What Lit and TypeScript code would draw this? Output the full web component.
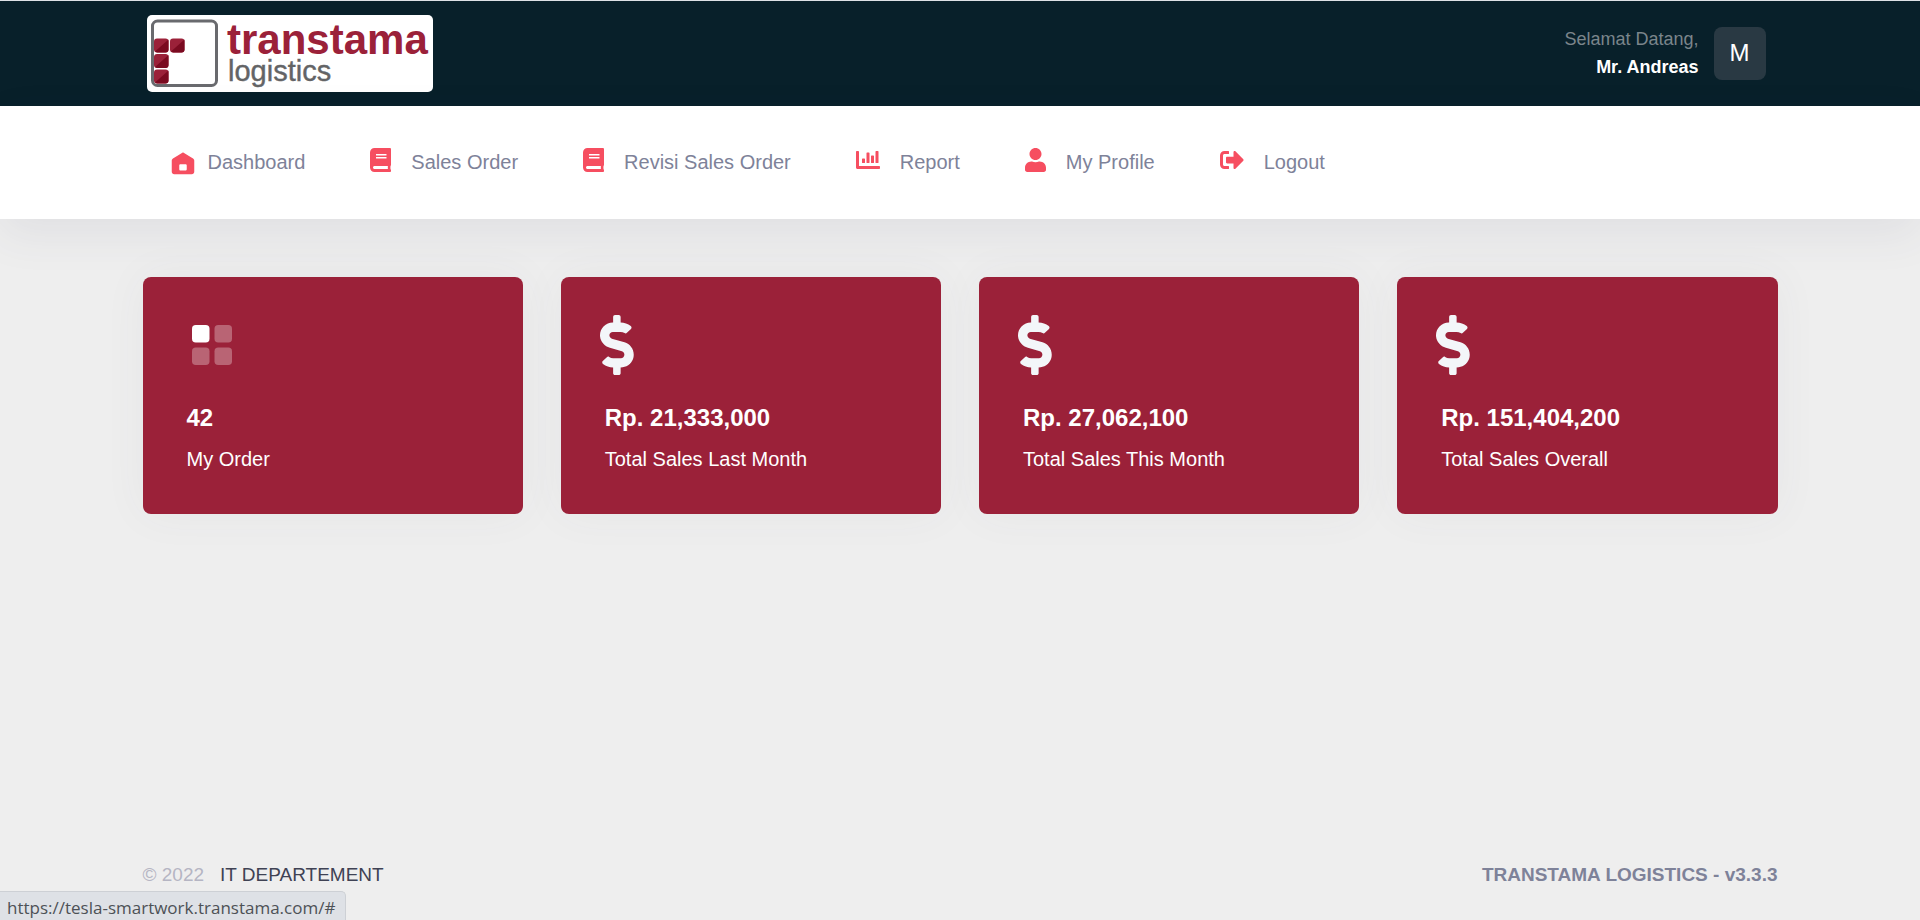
import { LitElement, html, svg, css } from "lit";
import { customElement, property } from "lit/decorators.js";

const fa = (width: number, path: string) => html`
  <svg class="fa" viewBox="0 0 ${width} 512" height="24" aria-hidden="true">
    <path fill="currentColor" d=${path}></path>
  </svg>
`;

const BOOK =
  "M448 360V24c0-13.3-10.7-24-24-24H96C43 0 0 43 0 96v320c0 53 43 96 96 96h328c13.3 0 24-10.7 24-24v-16c0-7.5-3.5-14.3-8.9-18.7-4.2-15.4-4.2-59.3 0-74.7 5.4-4.3 8.9-11.1 8.9-18.6zM128 134c0-3.3 2.7-6 6-6h212c3.3 0 6 2.7 6 6v20c0 3.3-2.7 6-6 6H134c-3.3 0-6-2.7-6-6v-20zm0 64c0-3.3 2.7-6 6-6h212c3.3 0 6 2.7 6 6v20c0 3.3-2.7 6-6 6H134c-3.3 0-6-2.7-6-6v-20zm253.4 250H96c-17.7 0-32-14.3-32-32 0-17.6 14.4-32 32-32h285.4c-1.9 17.1-1.9 46.9 0 64z";
const CHART =
  "M332.8 320h38.4c6.4 0 12.8-6.4 12.8-12.8V172.8c0-6.4-6.4-12.8-12.8-12.8h-38.4c-6.4 0-12.8 6.4-12.8 12.8v134.4c0 6.4 6.4 12.8 12.8 12.8zm96 0h38.4c6.4 0 12.8-6.4 12.8-12.8V76.8c0-6.4-6.4-12.8-12.8-12.8h-38.4c-6.4 0-12.8 6.4-12.8 12.8v230.4c0 6.4 6.4 12.8 12.8 12.8zm-288 0h38.4c6.4 0 12.8-6.4 12.8-12.8v-70.4c0-6.4-6.4-12.8-12.8-12.8h-38.4c-6.4 0-12.8 6.4-12.8 12.8v70.4c0 6.4 6.4 12.8 12.8 12.8zm96 0h38.4c6.4 0 12.8-6.4 12.8-12.8V108.8c0-6.4-6.4-12.8-12.8-12.8h-38.4c-6.4 0-12.8 6.4-12.8 12.8v198.4c0 6.4 6.4 12.8 12.8 12.8zM496 384H64V80c0-8.84-7.16-16-16-16H16C7.16 64 0 71.16 0 80v336c0 17.67 14.33 32 32 32h464c8.84 0 16-7.16 16-16v-32c0-8.84-7.16-16-16-16z";
const USER =
  "M224 256c70.7 0 128-57.3 128-128S294.7 0 224 0 96 57.3 96 128s57.3 128 128 128zm89.6 32h-16.7c-22.2 10.2-46.9 16-72.9 16s-50.6-5.8-72.9-16h-16.7C60.2 288 0 348.2 0 422.4V464c0 26.5 21.5 48 48 48h352c26.5 0 48-21.5 48-48v-41.6c0-74.2-60.2-134.4-134.4-134.4z";
const SIGN_OUT =
  "M497 273L329 441c-15 15-41 4.5-41-17v-96H152c-13.3 0-24-10.7-24-24v-96c0-13.3 10.7-24 24-24h136V88c0-21.4 25.9-32 41-17l168 168c9.3 9.4 9.3 24.6 0 34zM192 436v-40c0-6.6-5.4-12-12-12H96c-17.7 0-32-14.3-32-32V160c0-17.7 14.3-32 32-32h84c6.6 0 12-5.4 12-12V76c0-6.6-5.4-12-12-12H96c-53 0-96 43-96 96v192c0 53 43 96 96 96h84c6.6 0 12-5.4 12-12z";
const DOLLAR =
  "M209.2 233.4l-108-31.6C88.7 198.2 80 186.5 80 173.5c0-16.3 13.2-29.5 29.5-29.5h66.3c12.2 0 24.2 3.7 34.2 10.5 6.1 4.1 14.3 3.1 19.5-2l34.8-34c7.1-6.9 6.1-18.4-1.8-24.5C238 74.8 207.4 64.1 176 64V16c0-8.8-7.2-16-16-16h-32c-8.8 0-16 7.2-16 16v48h-2.5C45.8 64-5.4 118.7.5 183.6c4.2 46.1 39.4 83.6 83.8 96.6l102.5 30c12.5 3.7 21.2 15.3 21.2 28.3 0 16.3-13.2 29.5-29.5 29.5h-66.3C100 368 88 364.3 78 357.5c-6.1-4.1-14.3-3.1-19.5 2l-34.8 34c-7.1 6.9-6.1 18.4 1.8 24.5 24.5 19.2 55.1 29.9 86.5 30v48c0 8.8 7.2 16 16 16h32c8.8 0 16-7.2 16-16v-48.2c46.6-.9 90.3-28.6 105.7-72.7 21.5-61.6-14.6-124.8-72.5-141.7z";

const homeIcon = html`
  <svg class="home" viewBox="0 0 24 24" width="30" height="30" aria-hidden="true">
    <path
      fill="currentColor"
      fill-rule="evenodd"
      d="M3.957 8.415L11.479 3.819C11.799 3.623 12.201 3.623 12.521 3.819L20.043 8.415C20.637 8.778 21 9.425 21 10.122V19C21 20.105 20.105 21 19 21H5C3.895 21 3 20.105 3 19V10.122C3 9.425 3.363 8.778 3.957 8.415ZM10 13C9.448 13 9 13.448 9 14V17C9 17.552 9.448 18 10 18H14C14.552 18 15 17.552 15 17V14C15 13.448 14.552 13 14 13Z"
    ></path>
  </svg>
`;

const MENU = [
  { label: "Dashboard", icon: homeIcon, home: true },
  { label: "Sales Order", icon: fa(448, BOOK) },
  { label: "Revisi Sales Order", icon: fa(448, BOOK) },
  { label: "Report", icon: fa(512, CHART) },
  { label: "My Profile", icon: fa(448, USER) },
  { label: "Logout", icon: fa(512, SIGN_OUT) },
];

@customElement("brand-logo")
class BrandLogo extends LitElement {
  static styles = css`
    :host {
      display: block;
      line-height: 0;
    }
    .name {
      font: bold 42px "Liberation Sans", Arial, sans-serif;
      fill: #9b2139;
    }
    .sub {
      font: 29px "Liberation Sans", Arial, sans-serif;
      fill: #636466;
      stroke: #636466;
      stroke-width: 0.4;
    }
  `;

  private tile(x: number, y: number) {
    return svg`
      <rect x=${x} y=${y} width="14.5" height="14" rx="3" fill="#9b2139"></rect>
      <path d="M${x + 14.5} ${y + 1}V${y + 11}a3 3 0 0 1-3 3H${x + 3}l-2-1z" fill="#7a0a20"></path>
    `;
  }

  render() {
    return html`
      <svg width="286" height="77" viewBox="0 0 286 77" role="img" aria-label="transtama logistics">
        <rect width="286" height="77" rx="5" fill="#fff"></rect>
        <rect x="5.5" y="6" width="64" height="64.5" rx="5" fill="none" stroke="#696a6e" stroke-width="3"></rect>
        ${this.tile(7, 23.5)} ${this.tile(23, 23.5)} ${this.tile(7, 39)} ${this.tile(7, 54.5)}
        <text class="name" x="80" y="39">transtama</text>
        <text class="sub" x="81" y="66">logistics</text>
      </svg>
    `;
  }
}

@customElement("stat-card")
class StatCard extends LitElement {
  @property() icon = "dollar";
  @property() value = "";
  @property() label = "";

  static styles = css`
    :host {
      display: block;
      padding: 38px 39px 39px;
      border-radius: 8px;
      background: #9b2139;
      color: #fff;
      box-shadow: 0 0 45px rgba(72, 72, 105, 0.05);
    }
    .icon {
      display: block;
      height: 60px;
    }
    .text {
      margin: 28px 5px 0;
    }
    .value {
      margin: 0 0 11px;
      font-size: 24px;
      line-height: 30px;
      font-weight: bold;
    }
    .label {
      margin: 0;
      font-size: 20px;
      line-height: 31px;
    }
  `;

  render() {
    return html`
      ${this.icon === "blocks"
        ? html`<svg class="icon" viewBox="0 0 24 24" aria-hidden="true">
            <g fill="#fff">
              <rect x="4" y="4" width="7" height="7" rx="1.5"></rect>
              <rect x="13" y="4" width="7" height="7" rx="1.5" opacity="0.3"></rect>
              <rect x="4" y="13" width="7" height="7" rx="1.5" opacity="0.3"></rect>
              <rect x="13" y="13" width="7" height="7" rx="1.5" opacity="0.3"></rect>
            </g>
          </svg>`
        : html`<svg class="icon" viewBox="0 0 288 512" aria-hidden="true">
            <path fill="#f3f6f9" d=${DOLLAR}></path>
          </svg>`}
      <div class="text">
        <p class="value">${this.value}</p>
        <p class="label">${this.label}</p>
      </div>
    `;
  }
}

@customElement("app-root")
class AppRoot extends LitElement {
  static styles = css`
    :host {
      display: flex;
      flex-direction: column;
      min-height: 100vh;
      background: #eee;
      font-family: "Liberation Sans", Arial, sans-serif;
      font-size: 20px;
      line-height: 30px;
    }
    .container {
      box-sizing: border-box;
      width: 100%;
      max-width: 1635px;
      margin: 0 auto;
    }
    .header {
      border-top: 1px solid #dee1e6;
      background: #08202a;
    }
    .bar {
      display: flex;
      align-items: center;
      justify-content: space-between;
      padding: 14px 12px 14px 4px;
    }
    .user {
      display: flex;
      align-items: center;
      gap: 15px;
      font-size: 18px;
      line-height: 28px;
      text-align: right;
    }
    .welcome {
      padding-bottom: 2px;
    }
    .greeting {
      display: block;
      color: #7b858b;
    }
    .username {
      display: block;
      color: #fff;
    }
    .avatar {
      width: 52px;
      height: 53px;
      padding: 0 0 2px;
      border: 0;
      border-radius: 8px;
      background: #293943;
      color: #fff;
      font: 24px "Liberation Sans", Arial, sans-serif;
    }
    .nav {
      background: #fff;
      box-shadow: 0 15px 45px rgba(66, 70, 105, 0.08);
    }
    .menu {
      display: flex;
      flex-wrap: wrap;
      column-gap: 65px;
      padding: 41px 25px 42px;
      list-style: none;
    }
    .link {
      display: flex;
      align-items: center;
      gap: 20px;
      color: #7e8299;
      text-decoration: none;
    }
    .link svg {
      flex: none;
      color: #f64e60;
    }
    .link.first {
      gap: 10px;
    }
    .fa {
      margin-bottom: 4px;
    }
    .home {
      margin: 1px 0 -1px;
    }
    .cards {
      display: grid;
      grid-template-columns: repeat(auto-fit, minmax(300px, 1fr));
      gap: 38px;
      padding: 58px 0;
    }
    .footer {
      margin-top: auto;
      padding-bottom: 30px;
    }
    .foot {
      display: flex;
      justify-content: space-between;
      font-size: 19px;
    }
    .copy {
      display: flex;
      gap: 16px;
      color: #b5b5c3;
    }
    .dept {
      color: #3f4254;
      text-decoration: none;
    }
    .version {
      color: #7e8299;
    }
    .status {
      position: fixed;
      left: 0;
      bottom: 0;
      box-sizing: border-box;
      height: 29px;
      padding: 4px 10px 0 7px;
      border: 1px solid #cdd0d5;
      border-width: 1px 1px 0 0;
      border-radius: 0 5px 0 0;
      background: #dee1e6;
      color: #4d5156;
      font: 17px/24px "Open Sans", "Noto Sans", sans-serif;
    }
  `;

  render() {
    return html`
      <header class="header">
        <div class="container bar">
          <brand-logo></brand-logo>
          <div class="user">
            <div class="welcome">
              <span class="greeting">Selamat Datang,</span>
              <strong class="username">Mr. Andreas</strong>
            </div>
            <button class="avatar" type="button" aria-label="Account">M</button>
          </div>
        </div>
      </header>
      <nav class="nav">
        <ul class="container menu">
          ${MENU.map(
            (item) => html`<li>
              <a class="link ${item.home ? "first" : ""}" href="#">${item.icon}<span>${item.label}</span></a>
            </li>`
          )}
        </ul>
      </nav>
      <main class="container cards">
        <stat-card icon="blocks" value="42" label="My Order"></stat-card>
        <stat-card value="Rp. 21,333,000" label="Total Sales Last Month"></stat-card>
        <stat-card value="Rp. 27,062,100" label="Total Sales This Month"></stat-card>
        <stat-card value="Rp. 151,404,200" label="Total Sales Overall"></stat-card>
      </main>
      <footer class="footer">
        <div class="container foot">
          <div class="copy"><span>© 2022</span><a class="dept" href="#">IT DEPARTEMENT</a></div>
          <strong class="version">TRANSTAMA LOGISTICS - v3.3.3</strong>
        </div>
      </footer>
      <div class="status">https://tesla-smartwork.transtama.com/#</div>
    `;
  }
}
